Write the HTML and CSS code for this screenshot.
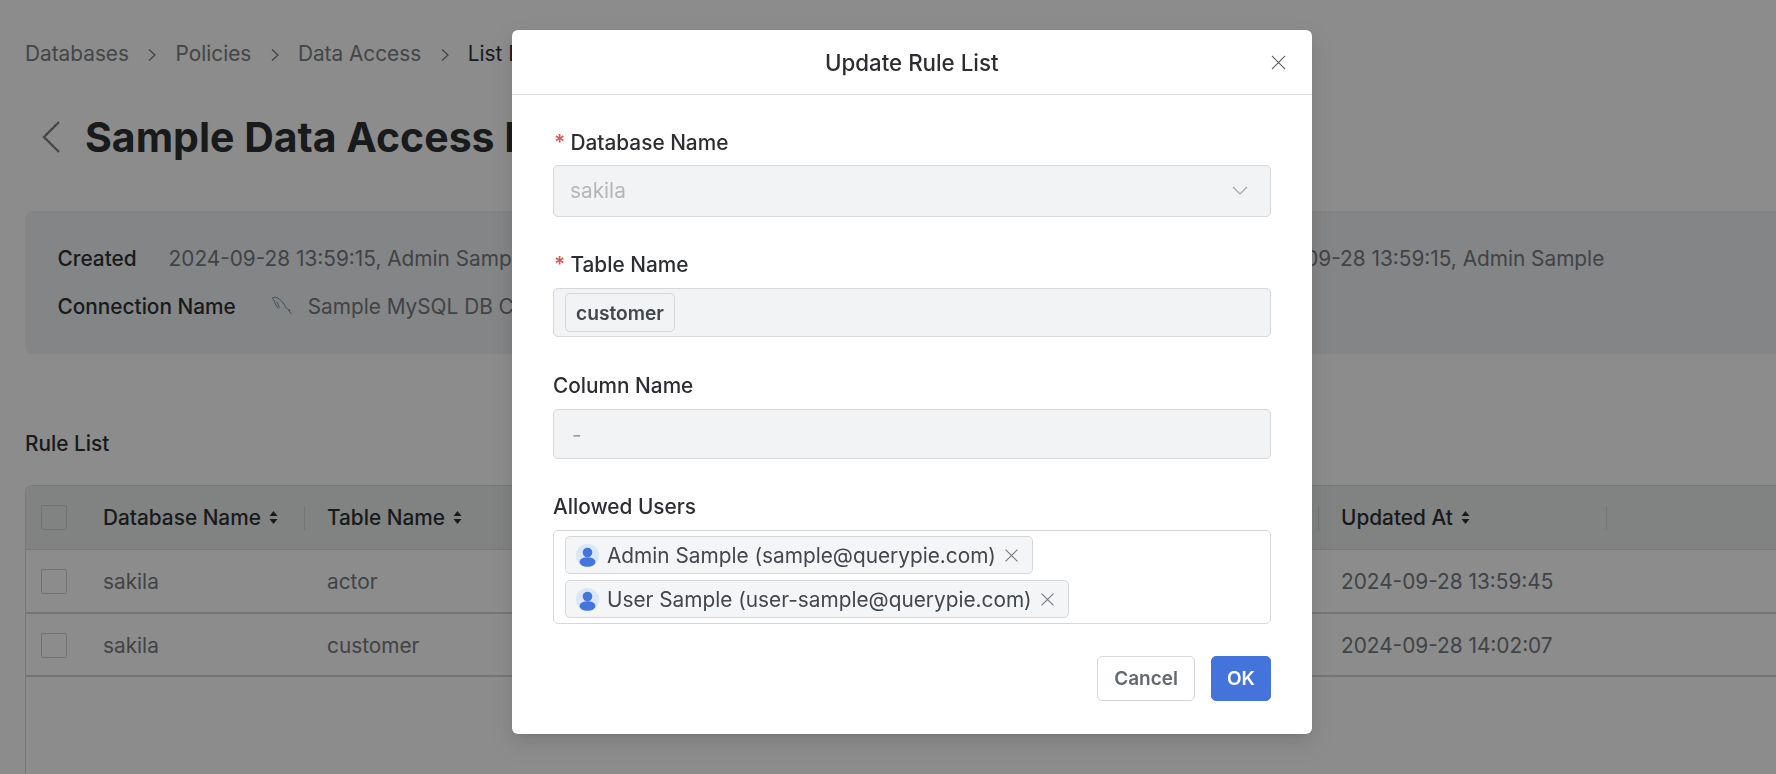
FILE: index.html
```html
<!DOCTYPE html>
<html lang="en">
<head>
  <meta charset="UTF-8">
  <title>Update Rule List</title>
  <link rel="stylesheet" href="styles.css">
</head>
<body>
  <div class="page">
    <nav class="crumbs">
      <span>Databases</span>
      <svg class="crumb-sep" viewBox="0 0 10 14"><path d="M2 1.500l6 5.500-6 5.500"/></svg>
      <span>Policies</span>
      <svg class="crumb-sep" viewBox="0 0 10 14"><path d="M2 1.500l6 5.500-6 5.500"/></svg>
      <span>Data Access</span>
      <svg class="crumb-sep" viewBox="0 0 10 14"><path d="M2 1.500l6 5.500-6 5.500"/></svg>
      <span class="crumb-current">List Details</span>
    </nav>

    <div class="title-row">
      <svg class="back-icon" viewBox="0 0 20 32"><path d="M18 1L3 16l15 15"/></svg>
      <h1>Sample Data Access Policy</h1>
    </div>

    <section class="info-card">
      <div class="info-col">
        <div class="info-row">
          <span class="info-label">Created</span>
          <span class="info-value">2024-09-28 13:59:15, Admin Sample</span>
        </div>
        <div class="info-row">
          <span class="info-label">Connection Name</span>
          <span class="info-value conn-value">
            <svg class="mysql-icon" viewBox="0 0 22 22"><path d="M0.500 2C3 0.500 5.500 1.500 8 3.500c3 2.500 5 5 6 8 0.800 2 3.500 2.500 5 3.500l-1.500 0.500 3 3.500M0.500 2l2 3.500 1.500 4 3 3.500M5 6l3 6"/></svg>
            Sample MySQL DB Connection
          </span>
        </div>
      </div>
      <div class="info-col">
        <div class="info-row">
          <span class="info-value">2024-09-28 13:59:15, Admin Sample</span>
        </div>
      </div>
    </section>

    <h2 class="list-title">Rule List</h2>

    <div class="table">
      <div class="table-row table-head">
        <div class="cell cell-check"><span class="checkbox"></span></div>
        <div class="cell">Database Name <svg class="sort-icon" viewBox="0 0 9 13"><path d="M4.500 0L8.500 5H0.500zM4.500 13L0.500 8h8z"/></svg><span class="col-sep"></span></div>
        <div class="cell">Table Name <svg class="sort-icon" viewBox="0 0 9 13"><path d="M4.500 0L8.500 5H0.500zM4.500 13L0.500 8h8z"/></svg></div>
        <div class="cell"></div>
        <div class="cell"><span class="col-sep"></span></div>
        <div class="cell">Updated At <svg class="sort-icon" viewBox="0 0 9 13"><path d="M4.500 0L8.500 5H0.500zM4.500 13L0.500 8h8z"/></svg><span class="col-sep"></span></div>
        <div class="cell"></div>
      </div>
      <div class="table-row">
        <div class="cell cell-check"><span class="checkbox"></span></div>
        <div class="cell">sakila</div>
        <div class="cell">actor</div>
        <div class="cell"></div>
        <div class="cell"></div>
        <div class="cell">2024-09-28 13:59:45</div>
        <div class="cell"></div>
      </div>
      <div class="table-row">
        <div class="cell cell-check"><span class="checkbox"></span></div>
        <div class="cell">sakila</div>
        <div class="cell">customer</div>
        <div class="cell"></div>
        <div class="cell"></div>
        <div class="cell">2024-09-28 14:02:07</div>
        <div class="cell"></div>
      </div>
    </div>
  </div>

  <div class="overlay">
    <div class="modal">
      <header class="modal-head">
        <h3>Update Rule List</h3>
        <svg class="modal-close" viewBox="0 0 16 16"><path d="M1 1l14 14M15 1L1 15"/></svg>
      </header>

      <form class="modal-body">
        <div class="field field-first">
          <label class="field-label"><span class="required">*</span>Database Name</label>
          <div class="control control-select">
            <span>sakila</span>
            <svg class="select-arrow" viewBox="0 0 16 10"><path d="M1 1l7 7 7-7"/></svg>
          </div>
        </div>

        <div class="field field-table">
          <label class="field-label"><span class="required">*</span>Table Name</label>
          <div class="control control-tags">
            <span class="tag-plain">customer</span>
          </div>
        </div>

        <div class="field">
          <label class="field-label">Column Name</label>
          <div class="control control-text"><span>-</span></div>
        </div>

        <div class="field field-users">
          <label class="field-label">Allowed Users</label>
          <div class="control-users">
            <span class="user-chip">
              <svg class="avatar" viewBox="0 0 23 23"><circle cx="11.500" cy="11.500" r="11.500" fill="#d9e7f9"/><circle cx="11.500" cy="8.500" r="4.800" fill="#4475db"/><ellipse cx="11.500" cy="18" rx="8" ry="4.800" fill="#4475db"/></svg>
              Admin Sample (sample@querypie.com)
              <svg class="chip-close" viewBox="0 0 12 12"><path d="M.5.500l11 11M11.500.500l-11 11"/></svg>
            </span>
            <span class="user-chip">
              <svg class="avatar" viewBox="0 0 23 23"><circle cx="11.500" cy="11.500" r="11.500" fill="#d9e7f9"/><circle cx="11.500" cy="8.500" r="4.800" fill="#4475db"/><ellipse cx="11.500" cy="18" rx="8" ry="4.800" fill="#4475db"/></svg>
              User Sample (user-sample@querypie.com)
              <svg class="chip-close" viewBox="0 0 12 12"><path d="M.5.500l11 11M11.500.500l-11 11"/></svg>
            </span>
          </div>
        </div>

        <div class="modal-actions">
          <button type="button" class="btn">Cancel</button>
          <button type="button" class="btn btn-primary">OK</button>
        </div>
      </form>
    </div>
  </div>
</body>
</html>
```

FILE: styles.css
```css
* {
  box-sizing: border-box;
}
html, body {
  height: 100%;
}
body {
  margin: 0;
  background: #fff;
  color: #2f3134;
  font-family: Inter, "Liberation Sans", sans-serif;
  font-size: 20.800px;
  overflow: hidden;
}

/* page behind the dialog */
.page {
  padding: 41px 0 0 25px;
}
.crumbs {
  display: flex;
  align-items: center;
  height: 24px;
  color: #7b7e83;
  white-space: nowrap;
}
.crumb-sep {
  width: 10px;
  height: 14px;
  margin: 3px 18.300px 0 18.300px;
  fill: none;
  stroke: #7b7e83;
  stroke-width: 1.300;
}
.crumb-current {
  color: #2f3134;
}
.title-row {
  display: flex;
  align-items: center;
  height: 50px;
  margin-top: 47px;
  padding-left: 16px;
}
.back-icon {
  width: 20px;
  height: 32px;
  margin-right: 24px;
  fill: none;
  stroke: #7b7e83;
  stroke-width: 2.300;
}
h1 {
  margin: 0;
  font-size: 41px;
  font-weight: 700;
  white-space: nowrap;
}
.info-card {
  display: flex;
  height: 143px;
  margin-top: 49px;
  padding: 35px 0 0 32.500px;
  background: #f1f2f4;
  border-radius: 8px 0 0 8px;
}
.info-col {
  display: flex;
  flex-direction: column;
  gap: 23px;
}
.info-col:first-child {
  width: 1186.500px;
}
.info-row {
  display: flex;
  align-items: center;
  gap: 32px;
  height: 25px;
}
.info-label {
  font-weight: 500;
}
.info-value {
  color: #777a80;
  white-space: nowrap;
}
.conn-value {
  display: flex;
  align-items: center;
  gap: 15px;
  margin-left: 4px;
}
.mysql-icon {
  width: 21px;
  height: 21px;
  fill: none;
  stroke: #6f8ba3;
  stroke-width: 1;
}
.list-title {
  margin: 78px 0 0;
  font-size: 20.800px;
  font-weight: 500;
  line-height: 24px;
}
.table {
  height: 400px;
  margin-top: 29px;
  border: 1px solid #d9dbdd;
  border-right: 0;
  border-radius: 8px 0 0 0;
}
.table-row {
  display: grid;
  grid-template-columns: 55px 224px 340px 340px 334px 288px 1fr;
  height: 63.500px;
  padding-top: 2px;
  border-bottom: 2px solid #d5d6d8;
  color: #777a80;
}
.table-head {
  height: 64px;
  padding-top: 0;
  border-bottom: 1px solid #d9dbdd;
  background: #ebeeed;
  border-radius: 8px 0 0 0;
  color: #2f3134;
  font-weight: 500;
}
.cell {
  display: flex;
  align-items: center;
  padding-left: 22px;
  white-space: nowrap;
}
.cell-check {
  padding-left: 15px;
}
.checkbox {
  width: 26px;
  height: 25px;
  border: 1px solid #ced0d3;
  border-radius: 2px;
  background: #fff;
}
.table-head .checkbox {
  background: #ebeeed;
}
.sort-icon {
  width: 9px;
  height: 13px;
  margin-left: 8px;
  fill: #2f3134;
}
.col-sep {
  width: 1.500px;
  height: 24px;
  margin-left: auto;
  background: #d3d6d5;
}

/* dialog */
.overlay {
  position: fixed;
  top: 0;
  right: 0;
  bottom: 0;
  left: 0;
  padding: 30px 0 0 512px;
  background: rgba(0, 0, 0, 0.45);
}
.modal {
  width: 800px;
  height: 704px;
  background: #fff;
  border-radius: 6px;
  box-shadow: 0 6px 16px rgba(0, 0, 0, 0.08), 0 3px 6px -4px rgba(0, 0, 0, 0.12), 0 9px 28px 8px rgba(0, 0, 0, 0.05);
}
.modal-head {
  display: flex;
  align-items: center;
  justify-content: space-between;
  height: 65px;
  padding: 0 26px 0 313px;
  border-bottom: 1px solid #d9dadc;
}
h3 {
  margin: 0;
  font-size: 22.300px;
  font-weight: 500;
  color: #2c2e31;
}
.modal-close {
  width: 15px;
  height: 15px;
  fill: none;
  stroke: #5a5d62;
  stroke-width: 1.200;
}
.modal-body {
  display: flex;
  flex-direction: column;
  padding: 35px 41px 0;
}
.field {
  margin-bottom: 35px;
}
.field-table {
  margin-bottom: 36px;
}
.field-users {
  margin-bottom: 32px;
}
.field-label {
  display: flex;
  height: 25px;
  margin-bottom: 11px;
  align-items: center;
  color: #2c2e31;
  font-weight: 500;
}
.field-first .field-label {
  margin-bottom: 10px;
}
.required {
  width: 17.500px;
  padding-left: 1px;
  color: #d65a50;
  font-weight: 600;
}
.control {
  display: flex;
  align-items: center;
  height: 50px;
  background: #f2f3f5;
  border: 1px solid #d5d7da;
  border-radius: 5px;
  color: #b4b6ba;
}
.control-select {
  justify-content: space-between;
  height: 52px;
  padding: 0 22px 2px 16px;
}
.select-arrow {
  width: 16px;
  height: 10px;
  margin-top: 2px;
  fill: none;
  stroke: #a4a6aa;
  stroke-width: 1.200;
}
.control-tags {
  height: 49px;
  padding-left: 11px;
}
.tag-plain {
  display: flex;
  align-items: center;
  height: 39px;
  padding: 0 10px;
  background: #f2f3f5;
  border: 1px solid #d5d7da;
  border-radius: 5px;
  color: #43464a;
  font-size: 19.200px;
  font-weight: 600;
}
.control-text {
  padding-left: 18px;
  color: #9b9da1;
}
.control-users {
  display: flex;
  flex-direction: column;
  align-items: flex-start;
  gap: 6px;
  height: 94px;
  padding: 5px 11px 0;
  border: 1px solid #d5d7da;
  border-radius: 5px;
}
.user-chip {
  display: flex;
  align-items: center;
  height: 38px;
  padding: 0 14px 0 10px;
  background: #f4f5f7;
  border: 1px solid #d5d7da;
  border-radius: 5px;
  color: #43464a;
  white-space: nowrap;
}
.avatar {
  width: 23px;
  height: 23px;
  margin-right: 8px;
}
.chip-close {
  width: 13px;
  height: 13px;
  margin-left: 9px;
  fill: none;
  stroke: #75787d;
  stroke-width: 1;
}
.modal-actions {
  display: flex;
  justify-content: flex-end;
  gap: 16px;
}
.btn {
  height: 45px;
  padding: 0 16px;
  background: #fff;
  border: 1px solid #d5d7da;
  border-radius: 5px;
  color: #646870;
  font-family: inherit;
  font-size: 19px;
  font-weight: 600;
}
.btn-primary {
  width: 60px;
  padding: 0;
  background: #4473db;
  border-color: #4473db;
  color: #fff;
}
```
